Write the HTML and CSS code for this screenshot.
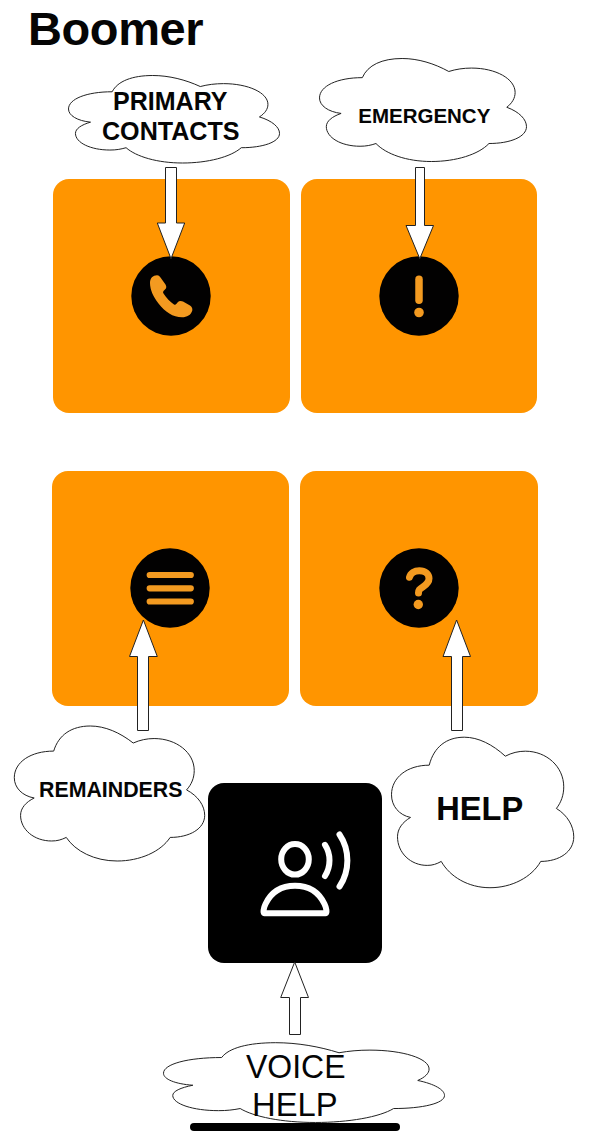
FILE: index.html
```html
<!DOCTYPE html>
<html lang="en">
<head>
<meta charset="utf-8">
<title>Boomer</title>
<link rel="stylesheet" href="styles.css">
</head>
<body>
<main class="screen">
  <h1 class="title">Boomer</h1>

  <div class="row row-first">
    <div class="tile">
      <svg class="icon" viewBox="0 0 80 80"><circle class="disc" cx="40" cy="40" r="39.7"/><path class="fill" d="M19 27 C19 22 22 19.500 26 19.300 Q28 19.200 29.500 21.500 L34.500 28.500 Q36.300 31.500 34 33.500 L32.500 35 Q31.500 36.200 32.500 37.500 C35.500 42 39 45.800 43 48.500 Q44.300 49.300 45.300 48 L46.500 46.500 Q48.500 44.300 52 45.500 L59 49.500 Q61.800 51.500 61.300 54.500 C60 59 56 61.300 51 61.300 C42 61.300 34 56 27.500 47.500 C22.500 41 19 34 19 27 Z"/></svg>
    </div>
    <div class="tile">
      <svg class="icon" viewBox="0 0 80 80"><circle class="disc" cx="40" cy="40" r="39.7"/><path class="line bang" d="M40 23.300V44.300"/><circle class="fill" cx="40" cy="56.500" r="4.800"/></svg>
    </div>
  </div>

  <div class="row row-second">
    <div class="tile">
      <svg class="icon" viewBox="0 0 80 80"><circle class="disc" cx="40" cy="40" r="39.7"/><path class="line bars" d="M19.700 27H60.800M19.700 40.300H60.800M19.700 53.500H60.800"/></svg>
    </div>
    <div class="tile">
      <svg class="icon" viewBox="0 0 80 80"><circle class="disc" cx="40" cy="40" r="39.7"/><path class="line query" d="M30.500 29.300 C31.500 25 35.500 22.800 40.300 22.800 C46.300 22.800 50 26 50 30.500 C50 34.500 47.500 36.500 44 38.800 C40.500 41 39.500 42 39.500 45"/><circle class="fill" cx="39.300" cy="56.500" r="4.700"/></svg>
    </div>
  </div>

  <div class="voice">
    <svg class="speaker" viewBox="0 0 174 180">
      <ellipse cx="87" cy="76.300" rx="13.800" ry="15.300"/>
      <path d="M56.500 130.300 C54.500 130.300 56 124 57.500 121 C63 109.500 73 102.800 87 102.800 C101 102.800 111 109.500 116.500 121 C118 124 119.500 130.300 117.500 130.300 Z"/>
      <path d="M117 61.800 C123 71 123 83.500 117 93"/>
      <path d="M131.500 51.500 C142 67 142 88 131.500 103.500"/>
    </svg>
  </div>

  <div class="home-bar"></div>

  <svg class="notes" viewBox="0 0 591 1143">
    <defs>
      <path id="cloud" d="M113 84 C127 29 165 0 218 0 C260 0 303 22 341 57 C360 47 380 42 401 42 C465 42 516 89 516 149 C516 174 508 196 494 214 C527 234 546 267 546 299 C546 344 503 373 447 373 C420 421 360 452 295 452 C230 452 175 419 149 373 C135 381 123 385 107 385 C57 385 18 347 18 299 C18 275 33 255 57 241 C23 234 0 207 0 173 C0 121 47 84 113 84 Z"/>
    </defs>
    <use class="shape" href="#cloud" transform="translate(68.500 75.500) scale(.3865 .1936)"/>
    <use class="shape" href="#cloud" transform="translate(319.500 58.500) scale(.3791 .2279)"/>
    <use class="shape" href="#cloud" transform="translate(14.300 726) scale(.3487 .2987)"/>
    <use class="shape" href="#cloud" transform="translate(391.500 737.200) scale(.3338 .3330)"/>
    <use class="shape" href="#cloud" transform="translate(163.500 1042.700) scale(.5147 .1765)"/>

    <path class="shape" d="M165.500 167.500H176.500V223H184.700L171 258.700L157.300 223H165.500Z"/>
    <path class="shape" d="M415.500 167.500H424.500V225.500H433.500L419.800 258.700L406 225.500H415.500Z"/>
    <path class="shape" d="M137.500 730.500V656.500H129.500L143.400 620L157.300 656.500H148.500V730.500Z"/>
    <path class="shape" d="M451.500 730.500V656.500H443L456.600 620L470.500 656.500H462.500V730.500Z"/>
    <path class="shape" d="M289.500 1034.500V997.500H280.700L294.700 962L308.500 997.500H300.500V1034.500Z"/>

    <g class="label">
      <text x="113" y="110" font-size="25" textLength="114.500" lengthAdjust="spacingAndGlyphs">PRIMARY</text>
      <text x="102" y="140" font-size="25" textLength="137.500" lengthAdjust="spacingAndGlyphs">CONTACTS</text>
      <text x="358.300" y="123" font-size="21" textLength="132" lengthAdjust="spacingAndGlyphs">EMERGENCY</text>
      <text x="39" y="797" font-size="22" textLength="143.500" lengthAdjust="spacingAndGlyphs">REMAINDERS</text>
      <text x="436.300" y="820" font-size="33" textLength="87" lengthAdjust="spacingAndGlyphs">HELP</text>
    </g>
    <g class="label light">
      <text x="246" y="1077.500" font-size="34" textLength="99.500" lengthAdjust="spacingAndGlyphs">VOICE</text>
      <text x="252" y="1116" font-size="34" textLength="85.500" lengthAdjust="spacingAndGlyphs">HELP</text>
    </g>
  </svg>
</main>
</body>
</html>
```
FILE: styles.css
```css
body {
  margin: 0;
  background: #fff;
  font-family: "Liberation Sans", Arial, sans-serif;
  color: #050505;
}
.screen {
  position: relative;
  box-sizing: border-box;
  width: 591px;
  height: 1143px;
  overflow: hidden;
  display: flex;
  flex-direction: column;
}
.title {
  margin: 3px 0 0 28px;
  height: 52px;
  line-height: 52px;
  font-size: 47px;
  font-weight: 700;
  letter-spacing: -0.400px;
}
.row {
  display: grid;
  gap: 11px;
}
.row-first {
  grid-template-columns: 236.500px 236.500px;
  margin: 124px 0 0 53px;
  height: 234px;
}
.row-second {
  grid-template-columns: 236.500px 238px;
  margin: 58px 0 0 52px;
  height: 234.500px;
}
.tile {
  display: flex;
  align-items: center;
  justify-content: center;
  background: #ff9500;
  border-radius: 16px;
}
.tile:first-child {
  box-sizing: border-box;
  padding-right: 1px;
}
.icon {
  width: 80px;
  height: 80px;
}
.disc {
  fill: #020101;
}
.fill {
  fill: #f39a20;
}
.line {
  fill: none;
  stroke: #f39a20;
  stroke-linecap: round;
  stroke-linejoin: round;
}
.bang {
  stroke-width: 7.500px;
}
.bars {
  stroke-width: 6.200px;
}
.query {
  stroke-width: 7px;
}
.voice {
  width: 174px;
  height: 180px;
  margin: 77.500px 0 0 208px;
  border-radius: 16px;
  background: #000;
}
.speaker {
  display: block;
  fill: none;
  stroke: #fff;
  stroke-width: 6px;
  stroke-linecap: round;
  stroke-linejoin: round;
}
.home-bar {
  width: 210px;
  height: 7.500px;
  margin: 160px 0 0 190px;
  border-radius: 4px;
  background: #000;
}
.notes {
  position: absolute;
  inset: 0;
  width: 591px;
  height: 1143px;
}
.shape {
  fill: #fff;
  stroke: #222;
  stroke-width: 1px;
  vector-effect: non-scaling-stroke;
}
#cloud {
  vector-effect: non-scaling-stroke;
}
.label {
  fill: #050505;
  font-weight: 700;
}
.light {
  font-weight: 400;
}
```
